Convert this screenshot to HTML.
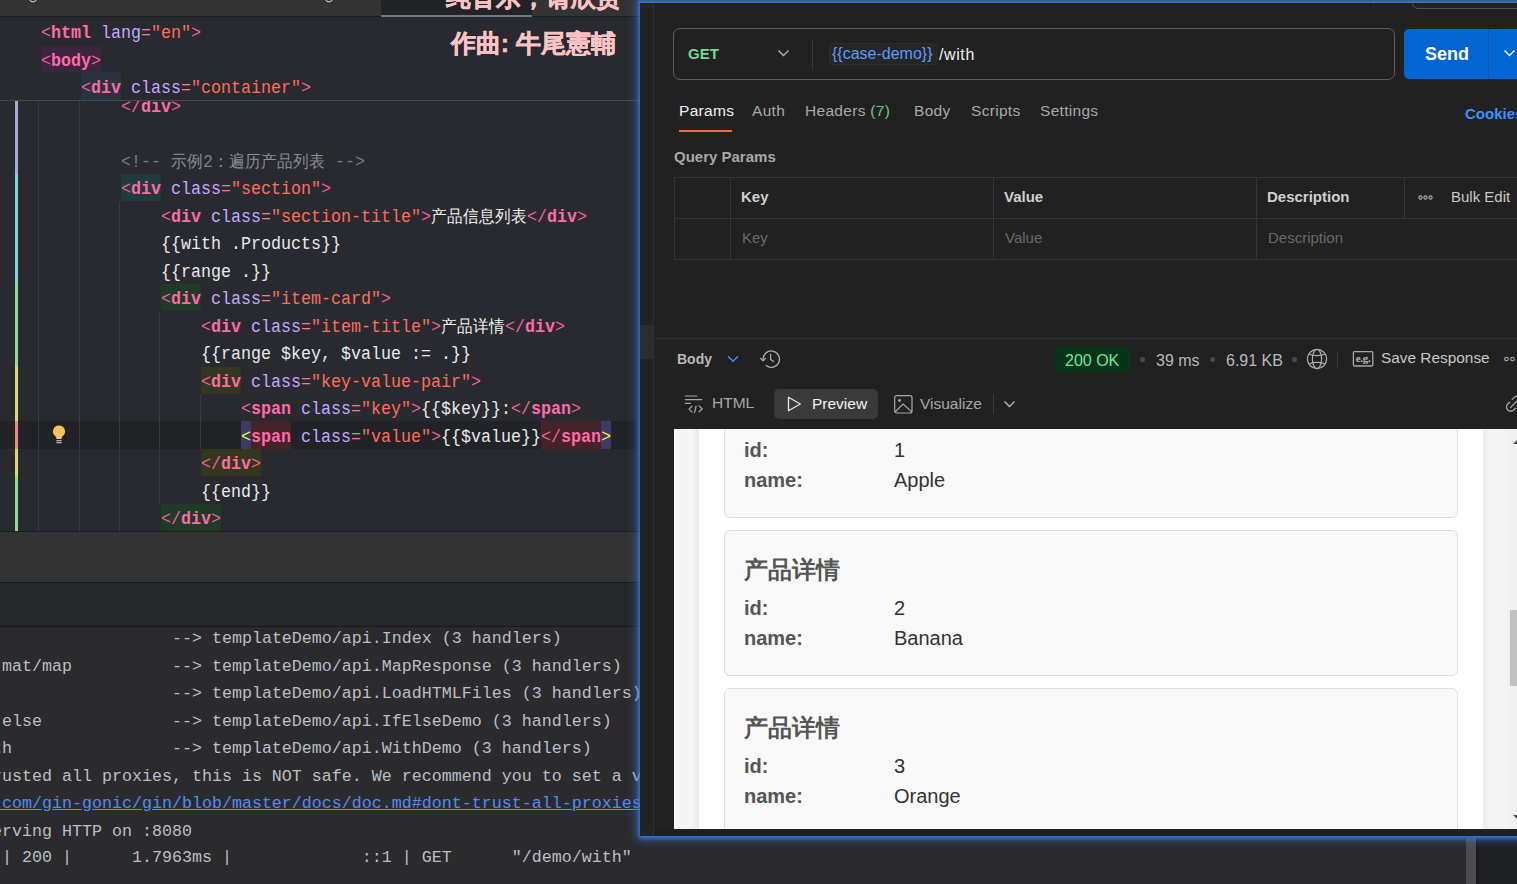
<!DOCTYPE html>
<html><head><meta charset="utf-8">
<style>
*{margin:0;padding:0;box-sizing:border-box}
html,body{width:1517px;height:884px;overflow:hidden;background:#2b2d30}
body{position:relative;font-family:"Liberation Sans",sans-serif}
.a{position:absolute}
.mono{font-family:"Liberation Mono",monospace}
/* IDE */
#tabbar{left:0;top:0;width:640px;height:17px;background:#333334;border-bottom:1px solid #1c1d1f}
#acttab{left:381px;top:0;width:151px;height:16px;background:#222327}
#actul{left:381px;top:14.5px;width:151px;height:2.5px;background:#737880;border-radius:1px}
#editor{left:0;top:17px;width:640px;height:514px;background:#292a2f;overflow:hidden}
.ln{position:absolute;height:27.5px;line-height:31px;transform:scaleY(1.09);transform-origin:0 20px;font-family:"Liberation Mono",monospace;font-size:16.67px;white-space:pre;color:#e8e9ec}
.t{color:#ff6aa8;font-weight:bold}
.b{color:#f0609a}
.at{color:#c3a9ff}
.eq{color:#ef7f8a}
.v{color:#ff6e5e}
.cm{color:#7a7e85}
.cm .cj{color:#8b8e94}
.cj{font-size:16px;color:#f4f4f4}
.box{position:absolute;height:27px}
.guide{position:absolute;width:1px;background:#393a3f}
.chg{position:absolute;left:15px;width:3px}
#sticky{left:0;top:0;width:640px;height:84px;background:#292a2f;border-bottom:1px solid #48494e}

.pt{white-space:nowrap;line-height:1;margin-top:2.5px}
.card{position:absolute;left:50px;width:734px;height:146px;background:#f9f9f9;border:1px solid #dedede;border-radius:6px}
.ct{position:absolute;left:19px;top:27px;font-size:24px;font-weight:bold;color:#555;line-height:1}
.kv{position:absolute;font-size:20px;line-height:1;white-space:nowrap}
.k{left:19px;font-weight:bold;color:#555}
.val{left:169px;color:#333}

.tl{position:absolute;left:2px;height:27.5px;line-height:29.5px;font-family:"Liberation Mono",monospace;font-size:16.67px;white-space:pre;color:#bcbec4}
.lyr{font-size:25px;font-weight:bold;color:#f8c4c6;white-space:nowrap;line-height:1;-webkit-text-stroke:0.4px #f8c4c6;text-shadow:0 0 1px #3a2a2a}
</style></head><body>

<!-- IDE tab bar -->
<div id="tabbar" class="a"></div>
<div id="acttab" class="a"></div>
<div id="actul" class="a"></div>


<svg class="a" style="left:28px;top:-3px" width="10" height="6" viewBox="0 0 10 6"><path d="M1.5 1.5Q2 4.8 5 4.8T8.5 1.5" stroke="#c8c8c8" stroke-width="1.2" fill="none"/></svg>
<svg class="a" style="left:324px;top:-3px" width="10" height="6" viewBox="0 0 10 6"><path d="M1.5 1.5Q2 4.8 5 4.8T8.5 1.5" stroke="#c8c8c8" stroke-width="1.2" fill="none"/></svg>
<!-- Editor -->
<div id="editor" class="a">
  <!-- current line -->
  <div class="a" style="left:0;top:404px;width:640px;height:28px;background:#222327"></div>
  <!-- change markers -->
  <div class="chg" style="top:83px;height:74px;background:#a9a9d8"></div>
  <div class="chg" style="top:157px;height:110px;background:#7fd6d6"></div>
  <div class="chg" style="top:267px;height:82px;background:#8fdc8a"></div>
  <div class="chg" style="top:349px;height:55px;background:#d8d67a"></div>
  <div class="chg" style="top:404px;height:28px;background:#e88a88"></div>
  <div class="chg" style="top:432px;height:27px;background:#d8d67a"></div>
  <div class="chg" style="top:459px;height:55px;background:#8fdc8a"></div>
  <!-- indent guides -->
  <div class="guide" style="left:38px;top:83px;height:431px"></div>
  <div class="guide" style="left:79px;top:83px;height:431px"></div>
  <div class="guide" style="left:119px;top:184.5px;height:330px"></div>
  <div class="guide" style="left:159px;top:294.5px;height:192px"></div>
  <div class="guide" style="left:200px;top:377px;height:55px"></div>
  <!-- highlight boxes -->
  <div class="box" style="left:121px;top:157px;width:40px;background:#1f3b3b"></div>
  <div class="box" style="left:161px;top:267px;width:40px;background:#1f3a26"></div>
  <div class="box" style="left:201px;top:349.5px;width:40px;background:#34361e"></div>
  <div class="box" style="left:241px;top:404px;height:28px;width:10px;background:#3b3b66"></div>
  <div class="box" style="left:251px;top:404px;height:28px;width:40px;background:#452328"></div>
  <div class="box" style="left:541px;top:404px;height:28px;width:60px;background:#452328"></div>
  <div class="box" style="left:601px;top:404px;height:28px;width:10px;background:#3b3b66"></div>
  <div class="box" style="left:201px;top:432px;width:60px;background:#34361e"></div>
  <div class="box" style="left:161px;top:487px;width:60px;background:#1f3a26"></div>

  <div class="ln" style="left:121px;top:74.5px"><span class="b">&lt;/</span><span class="t">div</span><span class="b">&gt;</span></div>
  <div class="ln cm" style="left:121px;top:129.5px">&lt;!-- <span class="cj">示例</span>2<span class="cj">：遍历产品列表</span> --&gt;</div>
  <div class="ln" style="left:121px;top:157px"><span class="b">&lt;</span><span class="t">div</span> <span class="at">class</span><span class="eq">=</span><span class="v">"section"</span><span class="b">&gt;</span></div>
  <div class="ln" style="left:161px;top:184.5px"><span class="b">&lt;</span><span class="t">div</span> <span class="at">class</span><span class="eq">=</span><span class="v">"section-title"</span><span class="b">&gt;</span><span class="cj">产品信息列表</span><span class="b">&lt;/</span><span class="t">div</span><span class="b">&gt;</span></div>
  <div class="ln" style="left:161px;top:212px">{{with .Products}}</div>
  <div class="ln" style="left:161px;top:239.5px">{{range .}}</div>
  <div class="ln" style="left:161px;top:267px"><span class="b">&lt;</span><span class="t">div</span> <span class="at">class</span><span class="eq">=</span><span class="v">"item-card"</span><span class="b">&gt;</span></div>
  <div class="ln" style="left:201px;top:294.5px"><span class="b">&lt;</span><span class="t">div</span> <span class="at">class</span><span class="eq">=</span><span class="v">"item-title"</span><span class="b">&gt;</span><span class="cj">产品详情</span><span class="b">&lt;/</span><span class="t">div</span><span class="b">&gt;</span></div>
  <div class="ln" style="left:201px;top:322px">{{range $key, $value := .}}</div>
  <div class="ln" style="left:201px;top:349.5px"><span class="b">&lt;</span><span class="t">div</span> <span class="at">class</span><span class="eq">=</span><span class="v">"key-value-pair"</span><span class="b">&gt;</span></div>
  <div class="ln" style="left:241px;top:377px"><span class="b">&lt;</span><span class="t">span</span> <span class="at">class</span><span class="eq">=</span><span class="v">"key"</span><span class="b">&gt;</span>{{$key}}:<span class="b">&lt;/</span><span class="t">span</span><span class="b">&gt;</span></div>
  <div class="ln" style="left:241px;top:404.5px"><span style="color:#f5f03c">&lt;</span><span class="t">span</span> <span class="at">class</span><span class="eq">=</span><span class="v">"value"</span><span class="b">&gt;</span>{{$value}}<span class="b">&lt;/</span><span class="t">span</span><span style="color:#f5f03c">&gt;</span></div>
  <div class="ln" style="left:201px;top:432px"><span class="b">&lt;/</span><span class="t">div</span><span class="b">&gt;</span></div>
  <div class="ln" style="left:201px;top:459.5px">{{end}}</div>
  <div class="ln" style="left:161px;top:487px"><span class="b">&lt;/</span><span class="t">div</span><span class="b">&gt;</span></div>

  <!-- lightbulb -->
  <svg class="a" style="left:51px;top:407px" width="16" height="22" viewBox="0 0 16 22">
    <path d="M8 1.5a6 6 0 0 0-3.6 10.8c.6.5 1 1.2 1 2V15h5.2v-.7c0-.8.4-1.5 1-2A6 6 0 0 0 8 1.5z" fill="#f2c55c"/>
    <rect x="5.4" y="16" width="5.2" height="1.3" fill="#aeb3bb"/>
    <rect x="5.4" y="18" width="5.2" height="1.3" fill="#aeb3bb"/>
  </svg>

  <!-- sticky header -->
  <div id="sticky" class="a">
    <div class="box" style="left:41px;top:28.5px;width:60px;height:26px;background:#3b2540"></div>
    <div class="box" style="left:81px;top:55px;width:40px;height:28px;background:#2a323e"></div>
    <div class="ln" style="left:41px;top:1px"><span class="b">&lt;</span><span class="t">html</span> <span class="at">lang</span><span class="eq">=</span><span class="v">"en"</span><span class="b">&gt;</span></div>
    <div class="ln" style="left:41px;top:28.5px"><span class="b">&lt;</span><span class="t">body</span><span class="b">&gt;</span></div>
    <div class="ln" style="left:81px;top:56px"><span class="b">&lt;</span><span class="t">div</span> <span class="at">class</span><span class="eq">=</span><span class="v">"container"</span><span class="b">&gt;</span></div>
  </div>
</div>

<!-- bottom bands -->
<div class="a" style="left:0;top:531px;width:640px;height:52px;background:#333334;border-top:1px solid #1b1c1e"></div>
<div class="a" style="left:0;top:582px;width:640px;height:45px;background:#26272a;border-top:1px solid #18191b;border-bottom:1px solid #18191b"></div>

<!-- terminal -->
<div class="a" style="left:0;top:627px;width:1517px;height:257px;background:#2b2b2d"></div>



<div class="a" style="left:0;top:627px;width:640px;height:257px;overflow:hidden">
  <div class="tl" style="top:-3px">                 --&gt; templateDemo/api.Index (3 handlers)</div>
  <div class="tl" style="top:24.5px;left:-8px">-mat/map          --&gt; templateDemo/api.MapResponse (3 handlers)</div>
  <div class="tl" style="top:52px">                 --&gt; templateDemo/api.LoadHTMLFiles (3 handlers)</div>
  <div class="tl" style="top:79.5px">else             --&gt; templateDemo/api.IfElseDemo (3 handlers)</div>
  <div class="tl" style="top:107px;left:-8px">th                --&gt; templateDemo/api.WithDemo (3 handlers)</div>
  <div class="tl" style="top:134.5px;left:-8px">rusted all proxies, this is NOT safe. We recommend you to set a value.</div>
  <div class="tl" style="top:162px;left:-8px;color:#548af7"><u>.com/gin-gonic/gin/blob/master/docs/doc.md#dont-trust-all-proxies</u></div>
  <div class="tl" style="top:189.5px;left:-8px">erving HTTP on :8080</div>
</div>
<div class="tl" style="top:843px">| 200 |      1.7963ms |             ::1 | GET      "/demo/with"</div>

<div class="a" style="left:1466px;top:838px;width:10px;height:46px;background:#4d4d4f"></div>
<div class="a" style="left:1476px;top:838px;width:2px;height:46px;background:#19191b"></div>
<div class="a" style="left:1478px;top:838px;width:39px;height:46px;background:#1f2023"></div>
<!-- lyrics -->
<div class="a lyr" style="right:896px;top:-15px">纯音乐，请欣赏</div>
<div class="a lyr" style="right:901px;top:31px">作曲: 牛尾憲輔</div>
<!-- POSTMAN -->
<div id="pm" class="a" style="left:640px;top:0;width:900px;height:836px;background:#212121;box-shadow:0 0 4px 1.5px rgba(58,122,222,1),0 0 10px 3px rgba(58,122,222,0.6)">
</div>

<div class="a" style="left:1370px;top:3px;width:1px;height:6px;background:#151515"></div>
<div class="a" style="left:1412px;top:-20px;width:130px;height:29px;border:1px solid #555;border-radius:6px"></div>
<div class="a" style="left:638px;top:0;width:879px;height:3px;background:linear-gradient(180deg,#3b5580,#3a78d8)"></div>
<div class="a" style="left:640px;top:3px;width:14px;height:833px;background:#232323;border-right:1px solid #303030"></div>
<div class="a" style="left:640px;top:324.5px;width:13px;height:34.5px;background:#2d2d2d"></div>

<!-- url bar -->
<div class="a" style="left:673px;top:28px;width:722px;height:52px;border:1px solid #5e5e5e;border-radius:7px"></div>
<div class="a pt" style="left:688px;top:43px;font-size:15px;font-weight:bold;color:#6ddc9a">GET</div>
<svg class="a" style="left:777px;top:49px" width="13" height="9" viewBox="0 0 13 9"><path d="M1.5 1.5l5 5 5-5" stroke="#b5b5b5" stroke-width="1.4" fill="none"/></svg>
<div class="a" style="left:812px;top:39px;width:1px;height:30px;background:#3a3a3a"></div>
<div class="a" style="left:829px;top:43px;width:108px;height:22px;border:1px solid #2e2e2e;background:#262626;border-radius:4px"></div>
<div class="a pt" style="left:832px;top:43px;font-size:16px;color:#5a9cff">{{case-demo}}</div>
<div class="a pt" style="left:939px;top:44px;font-size:16px;letter-spacing:0.6px;color:#f2f2f2">/with</div>

<!-- send -->
<div class="a" style="left:1404px;top:29px;width:130px;height:50px;background:#0265d2;border-radius:5px"></div>
<div class="a" style="left:1488px;top:29px;width:1px;height:50px;background:#0a55ad"></div>
<div class="a pt" style="left:1425px;top:42px;font-size:18px;font-weight:bold;color:#fff">Send</div>
<svg class="a" style="left:1503px;top:49px" width="13" height="9" viewBox="0 0 13 9"><path d="M1.5 1.5l5 5 5-5" stroke="#fff" stroke-width="1.4" fill="none"/></svg>

<!-- tabs -->
<div class="a pt" style="left:679px;top:100px;font-size:15.5px;letter-spacing:0.3px;color:#f2f2f2">Params</div>
<div class="a" style="left:679px;top:130px;width:53px;height:2px;background:#f26b3a"></div>
<div class="a pt" style="left:752px;top:100px;font-size:15.5px;letter-spacing:0.3px;color:#a8a8a8">Auth</div>
<div class="a pt" style="left:805px;top:100px;font-size:15.5px;letter-spacing:0.3px;color:#a8a8a8">Headers <span style="color:#5fcf7e">(7)</span></div>
<div class="a pt" style="left:914px;top:100px;font-size:15.5px;letter-spacing:0.3px;color:#a8a8a8">Body</div>
<div class="a pt" style="left:971px;top:100px;font-size:15.5px;letter-spacing:0.3px;color:#a8a8a8">Scripts</div>
<div class="a pt" style="left:1040px;top:100px;font-size:15.5px;letter-spacing:0.3px;color:#a8a8a8">Settings</div>
<div class="a pt" style="left:1465px;top:103px;font-size:15px;font-weight:bold;color:#3d8fff">Cookies</div>

<div class="a pt" style="left:674px;top:146px;font-size:15px;font-weight:bold;color:#a8a8a8">Query Params</div>

<!-- table -->
<div class="a" style="left:674px;top:177px;width:900px;height:83px;border:1px solid #353535"></div>
<div class="a" style="left:674px;top:218px;width:900px;height:1px;background:#353535"></div>
<div class="a" style="left:730px;top:177px;width:1px;height:83px;background:#353535"></div>
<div class="a" style="left:993px;top:177px;width:1px;height:83px;background:#353535"></div>
<div class="a" style="left:1256px;top:177px;width:1px;height:83px;background:#353535"></div>
<div class="a" style="left:1404px;top:177px;width:1px;height:41px;background:#353535"></div>
<div class="a pt" style="left:741px;top:186px;font-size:15px;font-weight:bold;color:#cfcfcf">Key</div>
<div class="a pt" style="left:1004px;top:186px;font-size:15px;font-weight:bold;color:#cfcfcf">Value</div>
<div class="a pt" style="left:1267px;top:186px;font-size:15px;font-weight:bold;color:#cfcfcf">Description</div>
<svg class="a" style="left:1418px;top:194px" width="15" height="7" viewBox="0 0 15 7"><g stroke="#b0b0b0" stroke-width="1.1" fill="none"><circle cx="2.5" cy="3.5" r="1.6"/><circle cx="7.5" cy="3.5" r="1.6"/><circle cx="12.5" cy="3.5" r="1.6"/></g></svg>
<div class="a pt" style="left:1451px;top:186px;font-size:15px;color:#c8c8c8">Bulk Edit</div>
<div class="a pt" style="left:742px;top:227.5px;font-size:15px;color:#6a6a6a">Key</div>
<div class="a pt" style="left:1005px;top:227.5px;font-size:15px;color:#6a6a6a">Value</div>
<div class="a pt" style="left:1268px;top:227.5px;font-size:15px;color:#6a6a6a">Description</div>

<!-- response divider -->
<div class="a" style="left:654px;top:338px;width:863px;height:1px;background:#303030"></div>

<!-- response bar -->
<div class="a pt" style="left:677px;top:349px;font-size:14px;font-weight:bold;color:#b8b8b8">Body</div>
<svg class="a" style="left:727px;top:355px" width="12" height="8" viewBox="0 0 12 8"><path d="M1 1.3l5 5 5-5" stroke="#3d8fff" stroke-width="1.4" fill="none"/></svg>
<svg class="a" style="left:759px;top:349px" width="22" height="20" viewBox="0 0 22 20"><g stroke="#b0b0b0" stroke-width="1.3" fill="none" stroke-linecap="round" stroke-linejoin="round"><path d="M4.1 10.9A8.2 8.2 0 1 1 7.2 16.6"/><path d="M1.7 9.4l2.4 2.5 2.5-2.5"/><path d="M11.6 5.3v5.2l3 2"/></g></svg>
<div class="a" style="left:1055px;top:347px;width:75px;height:25px;background:#07351a;border-radius:4px"></div>
<div class="a pt" style="left:1065px;top:350px;font-size:16px;color:#72e39b">200 OK</div>
<div class="a" style="left:1140px;top:357px;width:5px;height:5px;border-radius:50%;background:#4a4a4a"></div>
<div class="a pt" style="left:1156px;top:350px;font-size:16px;color:#b8b8b8">39 ms</div>
<div class="a" style="left:1210px;top:357px;width:5px;height:5px;border-radius:50%;background:#4a4a4a"></div>
<div class="a pt" style="left:1226px;top:350px;font-size:16px;color:#b8b8b8">6.91 KB</div>
<div class="a" style="left:1292px;top:357px;width:5px;height:5px;border-radius:50%;background:#4a4a4a"></div>
<svg class="a" style="left:1306px;top:348px" width="22" height="22" viewBox="0 0 22 22"><g stroke="#b0b0b0" stroke-width="1.2" fill="none"><circle cx="11" cy="11" r="9.6"/><ellipse cx="11" cy="11" rx="4.6" ry="9.6"/><path d="M3.2 6.3Q11 9 18.8 6.3M3.2 15.7Q11 13 18.8 15.7"/></g></svg>
<div class="a" style="left:1337px;top:352px;width:1px;height:15px;background:#3a3a3a"></div>
<svg class="a" style="left:1352px;top:350px" width="22" height="18" viewBox="0 0 22 18"><rect x="1.4" y="1.6" width="19.4" height="14.4" rx="1" stroke="#a8a8a8" stroke-width="1.3" fill="none"/><text x="11" y="12.2" font-family="Liberation Serif" font-size="11" font-weight="bold" fill="#b8b8b8" text-anchor="middle" letter-spacing="-0.3">e.g.</text></svg>
<div class="a pt" style="left:1381px;top:347px;font-size:15.4px;color:#c8c8c8">Save Response</div>
<svg class="a" style="left:1504px;top:355px" width="14" height="8" viewBox="0 0 14 8"><g stroke="#b0b0b0" stroke-width="1.1" fill="none"><circle cx="2.5" cy="4" r="1.8"/><circle cx="8.5" cy="4" r="1.8"/></g></svg>

<!-- view tabs -->
<svg class="a" style="left:684px;top:394px" width="20" height="20" viewBox="0 0 20 20"><g stroke="#a8a8a8" stroke-width="1.2" fill="none" stroke-linecap="round" stroke-linejoin="round"><path d="M1.3 2h11.4M1.3 5.6h16.5M1.3 9.3h5.1"/><path d="M8 12.3L5 15.1 8 18.1M15.1 12l3.2 2.8-3.2 3M12.1 12l-1.4 6.4"/></g></svg>
<div class="a pt" style="left:712px;top:392.5px;font-size:15.5px;color:#a8a8a8">HTML</div>
<div class="a" style="left:774px;top:389px;width:104px;height:30px;background:#3a3a3a;border-radius:5px"></div>
<svg class="a" style="left:787px;top:396px" width="15" height="16" viewBox="0 0 15 16"><path d="M1.5 1.2v13.6L13.3 8z" stroke="#e8e8e8" stroke-width="1.3" fill="none" stroke-linejoin="round"/></svg>
<div class="a pt" style="left:812px;top:393.5px;font-size:15.5px;color:#f2f2f2">Preview</div>
<svg class="a" style="left:894px;top:395px" width="19" height="19" viewBox="0 0 19 19"><g stroke="#a8a8a8" stroke-width="1.2" fill="none"><rect x="0.7" y="0.7" width="17.3" height="17.3" rx="2"/><path d="M1 17l8-8 9 8"/></g><circle cx="5.5" cy="5.5" r="1.4" fill="#a8a8a8"/></svg>
<div class="a pt" style="left:920px;top:393px;font-size:15.5px;color:#a8a8a8">Visualize</div>
<div class="a" style="left:993px;top:394px;width:1px;height:20px;background:#3a3a3a"></div>
<svg class="a" style="left:1003px;top:400px" width="13" height="9" viewBox="0 0 13 9"><path d="M1.5 1.5l5 5 5-5" stroke="#b5b5b5" stroke-width="1.4" fill="none"/></svg>
<svg class="a" style="left:1503px;top:392px" width="14" height="22" viewBox="0 0 14 22"><g stroke="#a8a8a8" stroke-width="1.3" fill="none" stroke-linecap="round"><path d="M6.6 10.2L4.8 12a4.2 4.2 0 0 0 6 6l1.8-1.8"/><path d="M7.4 15.6L14.5 8.5"/><path d="M9.2 7.4L11 5.6a4.2 4.2 0 0 1 6 0"/></g></svg>

<!-- preview -->
<div class="a" style="left:674px;top:429px;width:843px;height:400px;background:#fff;overflow:hidden">
  <div class="a" style="left:0;top:0;width:25px;height:400px;background:linear-gradient(90deg,#f5f5f5 70%,#e9e9e9)"></div>
  <div class="a" style="left:809px;top:0;width:25px;height:400px;background:linear-gradient(90deg,#ededed,#f3f3f3 30%)"></div>
  <div class="a" style="left:834px;top:0;width:9px;height:400px;background:#f0f0f0"></div>
  <div class="a" style="left:836px;top:181px;width:7px;height:76px;background:#c1c1c1"></div>
  <div class="a" style="left:839px;top:10px;width:0;height:0;border-left:5px solid transparent;border-right:5px solid transparent;border-bottom:5px solid #505050"></div>
  <div class="a" style="left:839px;top:386px;width:0;height:0;border-left:5px solid transparent;border-right:5px solid transparent;border-top:5px solid #505050"></div>
  <div class="card" style="top:-57px"><div class="ct">产品详情</div><div class="kv k" style="top:67px">id:</div><div class="kv val" style="top:67px">1</div><div class="kv k" style="top:97px">name:</div><div class="kv val" style="top:97px">Apple</div></div>
  <div class="card" style="top:101px"><div class="ct">产品详情</div><div class="kv k" style="top:67px">id:</div><div class="kv val" style="top:67px">2</div><div class="kv k" style="top:97px">name:</div><div class="kv val" style="top:97px">Banana</div></div>
  <div class="card" style="top:259px"><div class="ct">产品详情</div><div class="kv k" style="top:67px">id:</div><div class="kv val" style="top:67px">3</div><div class="kv k" style="top:97px">name:</div><div class="kv val" style="top:97px">Orange</div></div>
</div>
<div class="a" style="left:654px;top:829px;width:863px;height:7px;background:#1f1f1f"></div>
</body></html>
